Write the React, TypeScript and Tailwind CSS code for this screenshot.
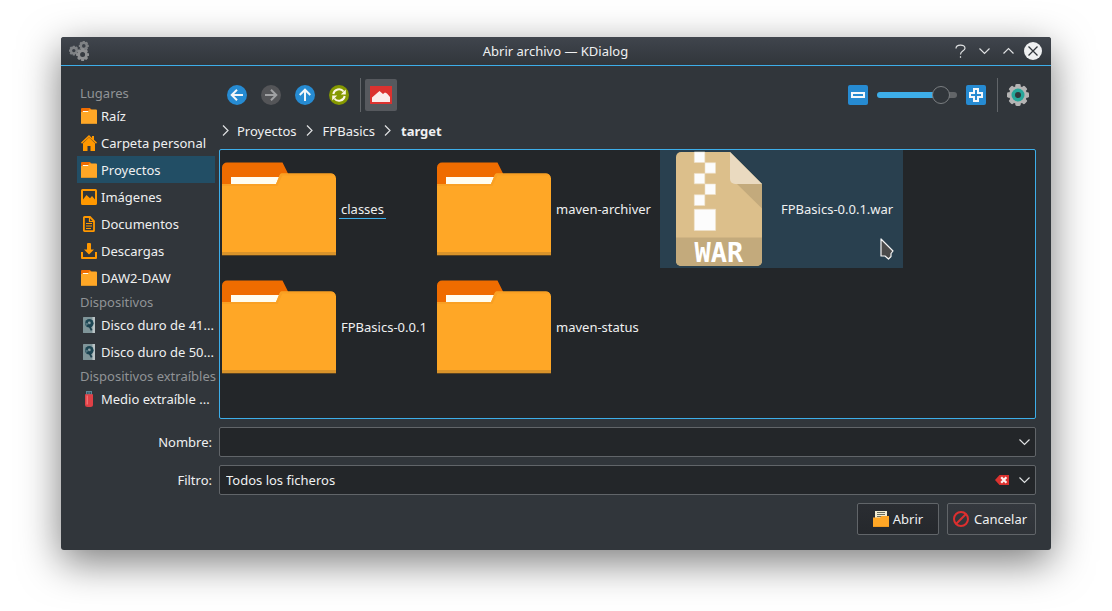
import React, { useState } from "react";

type IconProps = { className?: string };

function Gear({ cx, cy, r, teeth, hole, fill }: { cx: number; cy: number; r: number; teeth: number; hole: number; fill: string }) {
  const tooth = r * 0.46;
  return (
    <g>
      {Array.from({ length: teeth }, (_, i) => (
        <rect
          key={i}
          x={cx - tooth / 2}
          y={cy - r}
          width={tooth}
          height={r * 0.5}
          rx={0.3}
          fill={fill}
          transform={`rotate(${(360 / teeth) * i} ${cx} ${cy})`}
        />
      ))}
      <circle cx={cx} cy={cy} r={(r * 0.82 + hole) / 2} fill="none" stroke={fill} strokeWidth={r * 0.82 - hole} />
    </g>
  );
}

function CogsIcon() {
  return (
    <svg viewBox="0 0 20 20" className="h-5 w-5" aria-hidden="true">
      <Gear cx={14.8} cy={4.9} r={5} teeth={8} hole={1.8} fill="#7f8285" />
      <Gear cx={4.8} cy={9.6} r={4.9} teeth={8} hole={1.7} fill="#7f8285" />
      <Gear cx={13.6} cy={13.6} r={6.4} teeth={8} hole={2.5} fill="#8e9092" />
    </svg>
  );
}

function SettingsIcon() {
  return (
    <svg viewBox="0 0 22 22" className="h-[22px] w-[22px]" aria-hidden="true">
      {Array.from({ length: 8 }, (_, i) => (
        <rect key={i} x="8.3" y="0" width="5.4" height="6" rx="1.4" fill="#b4b4b4" transform={`rotate(${i * 45} 11 11)`} />
      ))}
      <circle cx="11" cy="11" r="9" fill="#b4b4b4" />
      <circle cx="11" cy="11" r="6.5" fill="#26a69a" />
      <circle cx="11" cy="11" r="3" fill="#31363b" />
    </svg>
  );
}

function Chevron({ dir, className = "" }: { dir: "down" | "up" | "right"; className?: string }) {
  const d = dir === "down" ? "M1.5 3.5 6.5 8.5 11.5 3.5" : dir === "up" ? "M1.5 8.5 6.5 3.5 11.5 8.5" : "M4 1.5 9 6.5 4 11.5";
  return (
    <svg viewBox="0 0 13 13" className={`h-[13px] w-[13px] shrink-0 ${className}`} fill="none" stroke="#dfe1e2" strokeWidth="1.2" aria-hidden="true">
      <path d={d} />
    </svg>
  );
}

function ArrowIcon({ turn, off }: { turn: number; off?: boolean }) {
  return (
    <svg viewBox="0 0 20 20" className="h-5 w-5" aria-hidden="true">
      <circle cx="10" cy="10" r="10" fill={off ? "#545558" : "#268bd2"} />
      <path
        d="M16 10H5M10 4.700 4.700 10l5.300 5.300"
        fill="none"
        stroke={off ? "#a0a1a3" : "#f3f6f8"}
        strokeWidth="2"
        transform={`rotate(${turn} 10 10)`}
      />
    </svg>
  );
}

function ReloadIcon() {
  return (
    <svg viewBox="0 0 20 20" className="h-5 w-5" aria-hidden="true">
      <circle cx="10" cy="10" r="10" fill="#859900" />
      <g fill="none" stroke="#fdf6e3" strokeWidth="2">
        <path d="M4.300 9A5.800 5.800 0 0 1 14.600 6.500" />
        <path d="M15.700 11A5.800 5.800 0 0 1 5.400 13.500" />
      </g>
      <path d="M16.800 4.500v5h-5z" fill="#fdf6e3" />
      <path d="M3.200 15.500v-5h5z" fill="#fdf6e3" />
    </svg>
  );
}

function PreviewIcon() {
  return (
    <svg viewBox="0 0 22 18" className="h-[18px] w-[22px]" aria-hidden="true">
      <rect width="22" height="18" fill="#dc322f" />
      <path d="M2 16v-4.500L9.500 5 13 8l2-1.500L17 7.500 20 11v5z" fill="#fbeceb" />
    </svg>
  );
}

function ZoomIcon({ plus }: { plus?: boolean }) {
  return (
    <svg viewBox="0 0 20 20" className="h-5 w-5" aria-hidden="true">
      <rect width="20" height="20" rx="2" fill="#268bd2" />
      <path
        d={plus ? "M8 4h4v4h4v4h-4v4H8v-4H4V8h4z" : "M4 8h12v4H4z"}
        fill="none"
        stroke="#f4f8fb"
        strokeWidth="2"
      />
    </svg>
  );
}

function SmallFolder() {
  return (
    <svg viewBox="0 0 16 16" className="h-4 w-4" aria-hidden="true">
      <path d="M0 1a1 1 0 0 1 1-1h8l1.200 1.500V6H0z" fill="#ef6c00" />
      <path d="M1.800 3h7v2h-7z" fill="#fffdf0" />
      <path d="M0 4h7l1-2.400h7a1 1 0 0 1 1 1V15H0z" fill="#ffa726" />
      <path d="M0 15h16v1H0z" fill="#d9932a" />
    </svg>
  );
}

function HomeIcon() {
  return (
    <svg viewBox="0 0 16 16" className="h-4 w-4" fill="#ff9800" aria-hidden="true">
      <path d="M8 0 0 7.600 1 8.700 8 2.200l7 6.500 1-1.100-3-2.800V1h-2v1.900z" />
      <path d="M8 2.400 2 8.200V16h4.500v-5h3v5H14V8.200z" />
    </svg>
  );
}

function ImageIcon() {
  return (
    <svg viewBox="0 0 16 16" className="h-4 w-4" aria-hidden="true">
      <path
        fillRule="evenodd"
        fill="#ff9800"
        d="M1.500 0h13A1.500 1.500 0 0 1 16 1.500v13a1.500 1.500 0 0 1-1.500 1.500h-13A1.500 1.500 0 0 1 0 14.500v-13A1.500 1.500 0 0 1 1.500 0zM2 2v8.500L5.500 6 9 9.200 11 7l3 3.500V2z"
      />
    </svg>
  );
}

function DocIcon() {
  return (
    <svg viewBox="0 0 16 16" className="h-4 w-4" fill="none" stroke="#ff9800" aria-hidden="true">
      <path d="M3.500 1h5.500L13 5v9.500a.6.6 0 0 1-.6.6H3.500a.6.6 0 0 1-.6-.6V1.600A.6.6 0 0 1 3.500 1z" strokeWidth="1.800" />
      <path d="M8.500 1v4.500H13M5 7.500h6M5 10h6M5 12.500h5" strokeWidth="1.200" />
    </svg>
  );
}

function DownloadIcon() {
  return (
    <svg viewBox="0 0 16 16" className="h-4 w-4" fill="#ff9800" aria-hidden="true">
      <path d="M6 1a1 1 0 0 1 1-1h2a1 1 0 0 1 1 1v5.500h3l-5 5-5-5h3z" />
      <path d="M0 9h2v5h12V9h2v6a1 1 0 0 1-1 1H1a1 1 0 0 1-1-1z" />
    </svg>
  );
}

function DiskIcon() {
  return (
    <svg viewBox="0 0 16 16" className="h-4 w-4" aria-hidden="true">
      <rect x="2" width="12" height="16" rx="0.6" fill="#7f9599" />
      <rect x="11.500" width="2.500" height="16" fill="#b9c3c5" />
      <circle cx="8.300" cy="6.300" r="4.300" fill="#1d4653" />
      <circle cx="8.300" cy="6" r="1.400" fill="#8fa5aa" />
      <path d="M8 6.500 11.500 13l-1.700.8L7.500 9z" fill="#1b3f4c" />
      <path d="M4 5.500 8 6.500 5 9z" fill="#53767f" />
    </svg>
  );
}

function UsbIcon() {
  return (
    <svg viewBox="0 0 16 16" className="h-4 w-4" aria-hidden="true">
      <path d="M5 0h6v4H5z" fill="#5c8796" />
      <path d="M6.200 1.200h1.300v1.500H6.200zM8.600 1.200h1.300v1.500H8.600z" fill="#233f4b" />
      <path d="M4 3.200h8v10.300a2.500 2.500 0 0 1-2.500 2.500h-3A2.500 2.500 0 0 1 4 13.500z" fill="#df4046" />
      <path d="M5.500 4.500h1.500v9H5.500z" fill="#ef6f72" />
    </svg>
  );
}

function BigFolder() {
  return (
    <svg viewBox="0 0 118 118" className="h-[118px] w-[118px] shrink-0" aria-hidden="true">
      <path d="M2 40V17.500a5 5 0 0 1 5-5h55.500L68 23.500V40z" fill="#ef6c00" />
      <path d="M11 27h50v9H11z" fill="#fffdf0" />
      <path d="M2 34h54l4-9.500a2 2 0 0 1 1.800-1H111a5 5 0 0 1 5 5V105H2z" fill="#ffa726" />
      <path d="M2 34h54l4-9.500a2 2 0 0 1 1.800-1H111a5 5 0 0 1 4 2H62.500l-5 10.500H2z" fill="#f9a023" />
      <path d="M2 102h114v3H2z" fill="#d9932a" />
      <path d="M2 105h114v.8H2z" fill="#6f4f20" />
    </svg>
  );
}

function WarFile() {
  return (
    <svg viewBox="0 0 118 118" className="h-[118px] w-[118px] shrink-0" aria-hidden="true">
      <path d="M21 2h49l32 32v77a5 5 0 0 1-5 5H21a5 5 0 0 1-5-5V7a5 5 0 0 1 5-5z" fill="#dcbf8b" />
      <path d="M77 34h25v24.500z" fill="#c3aa7c" />
      <path d="M70 2v27a5 5 0 0 0 5 5h27z" fill="#eadac0" />
      <path d="M16 87.500h86V111a5 5 0 0 1-5 5H21a5 5 0 0 1-5-5z" fill="#c3aa7c" />
      <g fill="#fcfcfc" stroke="#efe1c9" strokeWidth="0.6">
        <path d="M34.300 2h10.500v10.500H34.300zM45 12.700h10.500v10.500H45zM34.300 23.400h10.500v10.400H34.300zM45 34h10.500v10.500H45zM34.300 44.800h10.500v10.700H34.300zM34.300 59.200h21.300v21.300H34.300z" />
      </g>
      <text x="59" y="112" textAnchor="middle" fontSize="27" fontWeight="700" fill="#ffffff" fontFamily="'DejaVu Sans Mono', monospace">
        WAR
      </text>
    </svg>
  );
}

function OpenIcon() {
  return (
    <svg viewBox="0 0 16 16" className="h-4 w-4" aria-hidden="true">
      <path d="M2 0h12v8H2z" fill="#f3ecd2" />
      <path d="M4 1.500h8M4 3.500h8M4 5.500h5" stroke="#6c6f60" />
      <path d="M0 6.500h7L8.500 5H16v11H0z" fill="#ffa726" />
      <path d="M0 15h16v1H0z" fill="#ef9a20" />
    </svg>
  );
}

function CancelIcon() {
  return (
    <svg viewBox="0 0 16 16" className="h-4 w-4" fill="none" stroke="#dc2f2f" strokeWidth="2" aria-hidden="true">
      <circle cx="8" cy="8" r="7" />
      <path d="M13 3 3 13" />
    </svg>
  );
}

function ClearIcon() {
  return (
    <svg viewBox="0 0 14 10" className="h-[10px] w-[14px]" aria-hidden="true">
      <path d="M0 5 4.500 0H14v10H4.500z" fill="#dc322f" />
      <path d="m6.200 2.200 5.200 5.600m0-5.600L6.200 7.800" stroke="#fdf0ef" strokeWidth="2.200" />
    </svg>
  );
}

function Pointer({ className = "" }: IconProps) {
  return (
    <svg viewBox="0 0 14 22" className={`h-[22px] w-[14px] ${className}`} aria-hidden="true">
      <path d="M1 1v17h4l3.500 3 2.500-2.500V15.500l2-2.500z" fill="#4b4b4b" stroke="#f5f5f5" strokeWidth="1.200" strokeLinejoin="round" />
    </svg>
  );
}

const groups = [
  {
    title: "Lugares",
    items: [
      { name: "Raíz", icon: SmallFolder },
      { name: "Carpeta personal", icon: HomeIcon },
      { name: "Proyectos", icon: SmallFolder },
      { name: "Imágenes", icon: ImageIcon },
      { name: "Documentos", icon: DocIcon },
      { name: "Descargas", icon: DownloadIcon },
      { name: "DAW2-DAW", icon: SmallFolder },
    ],
  },
  {
    title: "Dispositivos",
    items: [
      { name: "Disco duro de 41...", icon: DiskIcon },
      { name: "Disco duro de 50...", icon: DiskIcon },
    ],
  },
  { title: "Dispositivos extraíbles", items: [{ name: "Medio extraíble ...", icon: UsbIcon }] },
];

const files = ["classes", "FPBasics-0.0.1", "maven-archiver", "maven-status", "FPBasics-0.0.1.war"];

function TitleBar() {
  return (
    <header className="grid h-[29px] grid-cols-[1fr_auto_1fr] items-center rounded-t-[3px] border-b border-[#3daee9] bg-linear-to-b from-[#40454d] to-[#31363b] pr-[9px] pl-2">
      <CogsIcon />
      <h1>Abrir archivo — KDialog</h1>
      <div className="flex items-center justify-end gap-[11px]">
        <button aria-label="Ayuda" className="flex w-[13px] justify-center">
          <svg viewBox="0 0 13 15" className="h-[15px] w-[13px]" fill="none" stroke="#dfe1e2" strokeWidth="1.200" aria-hidden="true">
            <path d="M2 4.500C2 0 11 0 11 4.200 11 7 6.500 6.600 6.500 10.500" />
            <path d="M6.500 12.200v1.600" />
          </svg>
        </button>
        <button aria-label="Minimizar"><Chevron dir="down" /></button>
        <button aria-label="Maximizar"><Chevron dir="up" /></button>
        <button aria-label="Cerrar" className="-ml-[2px]">
          <svg viewBox="0 0 18 18" className="h-[18px] w-[18px]" aria-hidden="true">
            <circle cx="9" cy="9" r="9" fill="#eff0f1" />
            <path d="m4.500 4.500 9 9m0-9-9 9" stroke="#31363b" strokeWidth="1.300" />
          </svg>
        </button>
      </div>
    </header>
  );
}

function Places() {
  const [current, setCurrent] = useState("Proyectos");
  return (
    <nav className="w-[138px] shrink-0 pt-1">
      {groups.map((group) => (
        <section key={group.title}>
          <h2 className="h-5 pl-[3px] leading-[22px] whitespace-nowrap text-[#909396]">{group.title}</h2>
          <ul>
            {group.items.map(({ name, icon: Icon }) => (
              <li key={name}>
                <button
                  onClick={() => setCurrent(name)}
                  className={`flex h-[27px] w-full items-center gap-1 pl-1 text-left whitespace-nowrap ${name === current ? "bg-[#224e65]" : ""}`}
                >
                  <Icon />
                  {name}
                </button>
              </li>
            ))}
          </ul>
        </section>
      ))}
    </nav>
  );
}

function Toolbar() {
  const [zoom, setZoom] = useState(89);
  return (
    <div className="flex h-[34px] items-center pr-[7px] pl-2">
      <div className="flex gap-[14px]">
        <button aria-label="Atrás"><ArrowIcon turn={0} /></button>
        <button aria-label="Adelante" disabled><ArrowIcon turn={180} off /></button>
        <button aria-label="Subir"><ArrowIcon turn={90} /></button>
        <button aria-label="Recargar"><ReloadIcon /></button>
      </div>
      <div className="mr-1 ml-[11px] h-full w-px bg-[#616569]" />
      <button aria-label="Vista previa" aria-pressed="true" className="flex h-8 w-8 items-center justify-center rounded-[2px] bg-[#56595e]">
        <PreviewIcon />
      </button>
      <div className="ml-auto flex items-center gap-[9px]">
        <button aria-label="Alejar"><ZoomIcon /></button>
        <input
          type="range"
          aria-label="Tamaño de los iconos"
          value={zoom}
          onChange={(e) => setZoom(Number(e.target.value))}
          style={{ backgroundImage: `linear-gradient(to right, #3daee9 ${zoom - 8}%, #626568 ${zoom - 8}%)` }}
          className="h-[6px] w-20 appearance-none rounded-full [&::-webkit-slider-thumb]:h-[18px] [&::-webkit-slider-thumb]:w-[18px] [&::-webkit-slider-thumb]:appearance-none [&::-webkit-slider-thumb]:rounded-full [&::-webkit-slider-thumb]:border [&::-webkit-slider-thumb]:border-[#7a7e81] [&::-webkit-slider-thumb]:bg-[#31363b]"
        />
        <button aria-label="Acercar"><ZoomIcon plus /></button>
      </div>
      <div className="mr-[9px] ml-[11px] h-[34px] w-px bg-[#616569]" />
      <button aria-label="Opciones"><SettingsIcon /></button>
    </div>
  );
}

function Breadcrumbs() {
  return (
    <nav aria-label="Ruta" className="flex h-[37px] items-center">
      <Chevron dir="right" className="mr-[5px]" />
      <a href="#proyectos">Proyectos</a>
      <Chevron dir="right" className="mr-[7px] ml-[6px]" />
      <a href="#fpbasics">FPBasics</a>
      <Chevron dir="right" className="mr-[7px] ml-[6px]" />
      <a href="#target" className="font-bold">target</a>
    </nav>
  );
}

function Files() {
  const [selected, setSelected] = useState("FPBasics-0.0.1.war");
  return (
    <ul className="grid flex-1 grid-flow-col grid-cols-[215px_225px_243px] grid-rows-[118px_118px] content-start overflow-hidden rounded-[2px] border border-[#3daee9] bg-[#232629]">
      {files.map((name) => (
        <li key={name} className="relative">
          <button
            onClick={() => setSelected(name)}
            className={`flex w-full items-center text-left whitespace-nowrap ${name === selected ? "bg-[#29404f]" : ""}`}
          >
            {name.endsWith(".war") ? <WarFile /> : <BigFolder />}
            <span className={`ml-px border-b px-[2px] pt-px ${name === "classes" ? "border-[#3daee9]" : "border-transparent"}`}>{name}</span>
          </button>
          {name === "FPBasics-0.0.1.war" && <Pointer className="pointer-events-none absolute right-[9px] bottom-2" />}
        </li>
      ))}
    </ul>
  );
}

export default function App() {
  const [name, setName] = useState("");
  return (
    <div className="flex min-h-screen flex-col bg-white px-[61px] pt-[37px] pb-[61px] font-['Noto_Sans',sans-serif] text-[13px] leading-[18px] text-[#eff0f1]">
      <main className="flex flex-1 flex-col rounded-[3px] bg-[#31363b] shadow-[0_12px_40px_rgba(0,0,0,0.52)]">
        <TitleBar />
        <div className="flex flex-1 flex-col gap-2 pt-3 pr-[15px] pb-[15px] pl-4">
          <div className="flex flex-1 gap-1">
            <Places />
            <div className="flex min-w-0 flex-1 flex-col">
              <Toolbar />
              <Breadcrumbs />
              <Files />
            </div>
          </div>
          <div className="grid grid-cols-[135px_1fr] items-center gap-x-[7px] gap-y-2">
            <label htmlFor="name" className="text-right">Nombre:</label>
            <div className="flex h-[30px] items-center rounded-[2px] border border-[#616569] bg-[#232629] pr-1">
              <input id="name" value={name} onChange={(e) => setName(e.target.value)} className="h-full min-w-0 flex-1 bg-transparent px-[6px] outline-none" />
              <button aria-label="Mostrar historial"><Chevron dir="down" /></button>
            </div>
            <label htmlFor="filter" className="text-right">Filtro:</label>
            <div className="flex h-[30px] items-center rounded-[2px] border border-[#616569] bg-[#232629] pr-1">
              <select id="filter" className="h-full min-w-0 flex-1 appearance-none bg-transparent px-[6px] outline-none">
                <option>Todos los ficheros</option>
              </select>
              <button aria-label="Borrar filtro" className="mr-[9px]"><ClearIcon /></button>
              <Chevron dir="down" />
            </div>
          </div>
          <div className="flex justify-end gap-2">
            <button className="flex h-8 w-[82px] items-center justify-center gap-1 rounded-[2px] border border-[#616569] bg-linear-to-b from-[#2a2d32] to-[#25282c]">
              <OpenIcon />
              Abrir
            </button>
            <button className="flex h-8 w-[89px] items-center gap-[5px] rounded-[2px] border border-[#616569] bg-linear-to-b from-[#34383e] to-[#2f3338] pl-[5px]">
              <CancelIcon />
              Cancelar
            </button>
          </div>
        </div>
      </main>
    </div>
  );
}
